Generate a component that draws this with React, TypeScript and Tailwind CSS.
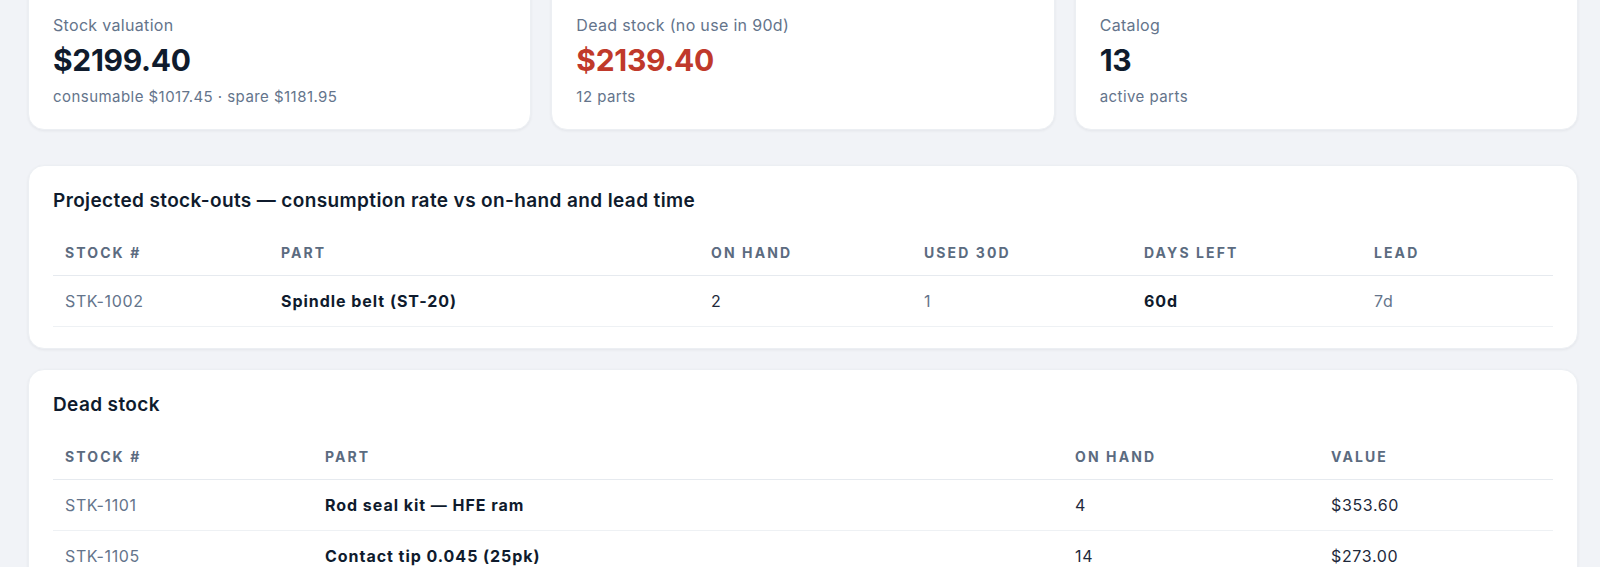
import React from "react";

interface StatCardProps {
  label: string;
  value: string;
  sub: string;
  danger?: boolean;
}

const StatCard = ({ label, value, sub, danger }: StatCardProps) => (
  <div className="rounded-2xl bg-white px-6 pt-[34px] pb-[22px] shadow-[0_1px_3px_rgba(15,23,42,0.06)] border border-[#eceff3]">
    <div className="text-[16px] leading-[20px] tracking-[0.02em] text-[#64748b]">{label}</div>
    <div
      className={
        danger
          ? "mt-[7px] text-[30px] leading-[36px] font-bold tracking-[-0.01em] text-[#c0392b]"
          : "mt-[7px] text-[30px] leading-[36px] font-bold tracking-[-0.01em] text-[#0f1b2d]"
      }
    >
      {value}
    </div>
    <div className="mt-[9px] text-[15px] leading-[20px] tracking-[0.03em] text-[#64748b]">{sub}</div>
  </div>
);

interface Column {
  title: string;
  width: string;
}

const Section = ({
  title,
  columns,
  children,
}: {
  title: string;
  columns: Column[];
  children: React.ReactNode;
}) => (
  <section className="rounded-2xl bg-white px-6 pt-[25px] pb-[21px] shadow-[0_1px_3px_rgba(15,23,42,0.06)] border border-[#eceff3]">
    <h2 className="text-[19px] leading-[20px] font-semibold tracking-[0.02em] text-[#0f1b2d]">{title}</h2>
    <table className="mt-4 w-full table-fixed border-collapse">
      <colgroup>
        {columns.map((c) => (
          <col key={c.title} style={{ width: c.width }} />
        ))}
      </colgroup>
      <thead>
        <tr className="border-b border-[#e6eaef]">
          {columns.map((c) => (
            <th
              key={c.title}
              className="px-3 pt-[19px] pb-[15px] text-left text-[14px] leading-[14px] font-bold uppercase tracking-[0.15em] text-[#5b6b80]"
            >
              {c.title}
            </th>
          ))}
        </tr>
      </thead>
      <tbody>{children}</tbody>
    </table>
  </section>
);

const cell = "px-3 h-[51px] text-[16px] leading-[20px]";
const plain = "tracking-[0.04em]";
const strong = "tracking-[0.06em] font-bold text-[#0f1b2d]";

const forecast = [
  { stock: "STK-1002", part: "Spindle belt (ST-20)", onHand: "2", used: "1", left: "60d", lead: "7d" },
];

const dead = [
  { stock: "STK-1101", part: "Rod seal kit — HFE ram", onHand: "4", value: "$353.60" },
  { stock: "STK-1105", part: "Contact tip 0.045 (25pk)", onHand: "14", value: "$273.00" },
];

export default function App() {
  return (
    <div
      className="min-h-screen overflow-hidden bg-[#f1f3f7] pl-[28px] pr-[22px]"
      style={{ fontFamily: '"Inter", "Noto Sans", sans-serif' }}
    >
      <div className="-mt-[20px] grid grid-cols-3 gap-5">
        <StatCard
          label="Stock valuation"
          value="$2199.40"
          sub="consumable $1017.45 · spare $1181.95"
        />
        <StatCard label="Dead stock (no use in 90d)" value="$2139.40" sub="12 parts" danger />
        <StatCard label="Catalog" value="13" sub="active parts" />
      </div>

      <div className="mt-[35px] flex flex-col gap-[20px] pb-10">
        <Section
          title="Projected stock-outs — consumption rate vs on-hand and lead time"
          columns={[
            { title: "Stock #", width: "216px" },
            { title: "Part", width: "430px" },
            { title: "On hand", width: "213px" },
            { title: "Used 30d", width: "220px" },
            { title: "Days left", width: "230px" },
            { title: "Lead", width: "auto" },
          ]}
        >
          {forecast.map((r) => (
            <tr key={r.stock} className="border-b border-[#eef1f4]">
              <td className={`${cell} ${plain} text-[#64748b]`}>{r.stock}</td>
              <td className={`${cell} ${strong}`}>{r.part}</td>
              <td className={`${cell} ${plain} text-[#1e293b]`}>{r.onHand}</td>
              <td className={`${cell} ${plain} text-[#64748b]`}>{r.used}</td>
              <td className={`${cell} ${strong}`}>{r.left}</td>
              <td className={`${cell} ${plain} text-[#64748b]`}>{r.lead}</td>
            </tr>
          ))}
        </Section>

        <Section
          title="Dead stock"
          columns={[
            { title: "Stock #", width: "260px" },
            { title: "Part", width: "750px" },
            { title: "On hand", width: "256px" },
            { title: "Value", width: "auto" },
          ]}
        >
          {dead.map((r) => (
            <tr key={r.stock} className="border-b border-[#eef1f4]">
              <td className={`${cell} ${plain} text-[#64748b]`}>{r.stock}</td>
              <td className={`${cell} ${strong}`}>{r.part}</td>
              <td className={`${cell} ${plain} text-[#1e293b]`}>{r.onHand}</td>
              <td className={`${cell} ${plain} text-[#1e293b]`}>{r.value}</td>
            </tr>
          ))}
        </Section>
      </div>
    </div>
  );
}
